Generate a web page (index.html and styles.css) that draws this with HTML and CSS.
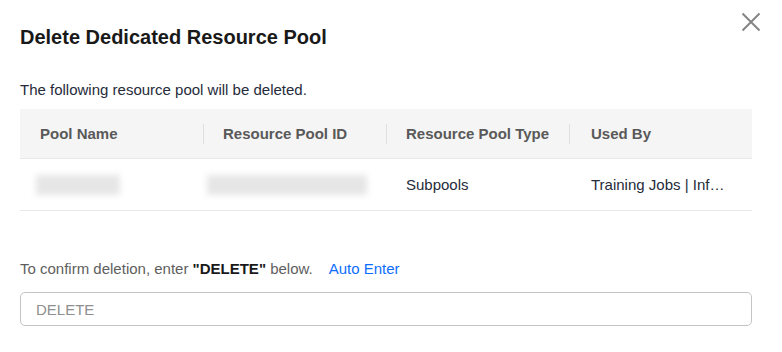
FILE: index.html
```html
<!DOCTYPE html>
<html lang="en">
<head>
<meta charset="utf-8">
<title>Delete Dedicated Resource Pool</title>
<link rel="stylesheet" href="styles.css">
</head>
<body>
<div class="dialog">
  <div class="dialog-header">
    <h1 class="dialog-title">Delete Dedicated Resource Pool</h1>
    <button class="close-btn" aria-label="Close">
      <svg width="20" height="20" viewBox="0 0 20 20"><path d="M1.5 1.5 L18.5 18.5 M18.5 1.5 L1.5 18.5" stroke="#858585" stroke-width="2" fill="none"/></svg>
    </button>
  </div>
  <p class="intro">The following resource pool will be deleted.</p>
  <div class="table">
    <div class="thead">
      <div class="th">Pool Name</div>
      <div class="th">Resource Pool ID</div>
      <div class="th">Resource Pool Type</div>
      <div class="th">Used By</div>
    </div>
    <div class="tr">
      <div class="td"><span class="blur blur-name"></span></div>
      <div class="td"><span class="blur blur-id"></span></div>
      <div class="td">Subpools</div>
      <div class="td ellipsis">Training Jobs | Inference Services</div>
    </div>
  </div>
  <div class="confirm">
    <span class="confirm-text">To confirm deletion, enter <b>"DELETE"</b> below.</span>
    <a class="auto-enter" href="#">Auto Enter</a>
  </div>
  <input class="confirm-input" type="text" placeholder="DELETE">
</div>
</body>
</html>
```
FILE: styles.css
```css
* { box-sizing: border-box; }
html, body { margin: 0; padding: 0; background: #fff; }
body { font-family: "Liberation Sans", Arial, sans-serif; color: #252b3a; }

.dialog { width: 782px; height: 352px; padding: 0 30px 0 20px; }

.dialog-header { display: flex; justify-content: space-between; align-items: flex-start; }
.dialog-title { margin: 0; padding-top: 25px; font-size: 20px; line-height: 24px; font-weight: bold; color: #191919; }
.close-btn { border: 0; background: none; padding: 0; margin: 12px -9px 0 0; width: 20px; height: 20px; cursor: pointer; display: flex; }

.intro { margin: 31px 0 0; font-size: 15px; line-height: 20px; color: #252b3a; }

.table { margin-top: 9px; width: 732px; font-size: 15px; }
.thead { display: grid; grid-template-columns: repeat(4, 1fr); background: #f5f5f5; height: 50px; border-bottom: 1px solid #e8e8e8; align-items: center; }
.th { position: relative; padding-left: 20px; font-weight: bold; color: #595959; }
.th + .th::before { content: ""; position: absolute; left: 0; top: 50%; margin-top: -10px; width: 1px; height: 20px; background: #dfdfdf; }
.tr { display: grid; grid-template-columns: repeat(4, 1fr); height: 52px; border-bottom: 1px solid #e8e8e8; align-items: center; }
.td { padding-left: 20px; color: #252b3a; white-space: nowrap; }
.td:last-child { padding-left: 22px; }
.th:last-child { padding-left: 22px; }
.ellipsis { overflow: hidden; text-overflow: ellipsis; padding-right: 23px; }

.blur { display: block; height: 20px; background: #e6e6e6; filter: blur(3px); }
.blur-name { width: 84px; margin-left: -4px; }
.blur-id { width: 160px; margin-left: -16px; }

.confirm { margin-top: 48px; font-size: 15px; line-height: 20px; display: flex; gap: 16px; }
.confirm-text { color: #5e5e5e; }
.confirm-text b { color: #191919; }
.auto-enter { color: #0d6efd; text-decoration: none; }

.confirm-input { display: block; margin-top: 13px; width: 732px; height: 34px; border: 1px solid #c4c4c4; border-radius: 5px; padding: 0 15px; font: 15px "Liberation Sans", Arial, sans-serif; color: #252b3a; outline: none; }
.confirm-input::placeholder { color: #8f8f8f; }
```
